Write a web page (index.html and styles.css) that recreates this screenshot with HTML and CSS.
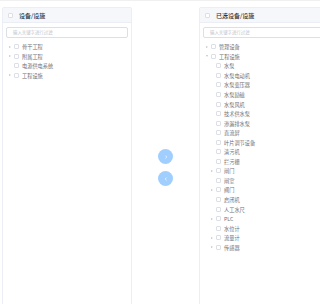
FILE: index.html
```html
<!DOCTYPE html>
<html lang="zh">
<head>
    <meta charset="UTF-8">
    <meta name="viewport" content="width=device-width, initial-scale=1.0">
    <title>设备/设施</title>
    <link rel="stylesheet" href="styles.css">
</head>
<body>
    <div class="transfer">
        <div class="panel">
            <div class="panel-header">
                <span class="checkbox"></span>
                <span class="panel-title">设备/设施</span>
            </div>
            <div class="panel-filter">
                <div class="filter-input">输入关键字进行过滤</div>
            </div>
            <ul class="tree">
                <li class="node"><span class="caret"></span><span class="checkbox"></span><span class="label">骨干工程</span></li>
                <li class="node"><span class="caret"></span><span class="checkbox"></span><span class="label">附属工程</span></li>
                <li class="node"><span class="caret leaf"></span><span class="checkbox"></span><span class="label">电源供电系统</span></li>
                <li class="node"><span class="caret"></span><span class="checkbox"></span><span class="label">工程设施</span></li>
            </ul>
        </div>

        <div class="buttons">
            <button class="circle-button">
                <svg viewBox="0 0 4 4" width="4" height="4"><polyline points="1.4,0.6 2.8,2 1.4,3.4" fill="none" stroke="#fff" stroke-width="0.7"/></svg>
            </button>
            <button class="circle-button">
                <svg viewBox="0 0 4 4" width="4" height="4"><polyline points="2.6,0.6 1.2,2 2.6,3.4" fill="none" stroke="#fff" stroke-width="0.7"/></svg>
            </button>
        </div>

        <div class="panel">
            <div class="panel-header">
                <span class="checkbox"></span>
                <span class="panel-title">已选设备/设施</span>
            </div>
            <div class="panel-filter">
                <div class="filter-input">输入关键字进行过滤</div>
            </div>
            <ul class="tree">
                <li class="node"><span class="caret"></span><span class="checkbox"></span><span class="label">管理设备</span></li>
                <li class="node"><span class="caret open"></span><span class="checkbox"></span><span class="label">工程设施</span></li>
                <li class="node sub"><span class="caret leaf"></span><span class="checkbox"></span><span class="label">水泵</span></li>
                <li class="node sub"><span class="caret leaf"></span><span class="checkbox"></span><span class="label">水泵电动机</span></li>
                <li class="node sub"><span class="caret leaf"></span><span class="checkbox"></span><span class="label">水泵变压器</span></li>
                <li class="node sub"><span class="caret leaf"></span><span class="checkbox"></span><span class="label">水泵励磁</span></li>
                <li class="node sub"><span class="caret leaf"></span><span class="checkbox"></span><span class="label">水泵风机</span></li>
                <li class="node sub"><span class="caret leaf"></span><span class="checkbox"></span><span class="label">技术供水泵</span></li>
                <li class="node sub"><span class="caret leaf"></span><span class="checkbox"></span><span class="label">渗漏排水泵</span></li>
                <li class="node sub"><span class="caret leaf"></span><span class="checkbox"></span><span class="label">直流屏</span></li>
                <li class="node sub"><span class="caret leaf"></span><span class="checkbox"></span><span class="label">叶片调节设备</span></li>
                <li class="node sub"><span class="caret leaf"></span><span class="checkbox"></span><span class="label">清污机</span></li>
                <li class="node sub"><span class="caret leaf"></span><span class="checkbox"></span><span class="label">拦污栅</span></li>
                <li class="node sub"><span class="caret"></span><span class="checkbox"></span><span class="label">闸门</span></li>
                <li class="node sub"><span class="caret leaf"></span><span class="checkbox"></span><span class="label">闸室</span></li>
                <li class="node sub"><span class="caret"></span><span class="checkbox"></span><span class="label">阀门</span></li>
                <li class="node sub"><span class="caret leaf"></span><span class="checkbox"></span><span class="label">启闭机</span></li>
                <li class="node sub"><span class="caret leaf"></span><span class="checkbox"></span><span class="label">人工水尺</span></li>
                <li class="node sub"><span class="caret"></span><span class="checkbox"></span><span class="label">PLC</span></li>
                <li class="node sub"><span class="caret leaf"></span><span class="checkbox"></span><span class="label">水位计</span></li>
                <li class="node sub"><span class="caret"></span><span class="checkbox"></span><span class="label">流量计</span></li>
                <li class="node sub"><span class="caret"></span><span class="checkbox"></span><span class="label">传感器</span></li>
            </ul>
        </div>
    </div>
</body>
</html>
```

FILE: styles.css
```css
body {
    margin: 0;
    font-family: "Noto Sans CJK SC", "Noto Sans", sans-serif;
    color: #6e7075;
    background-color: #fff;
    border-top: 1px solid #f0f0f0;
    overflow: hidden;
}
.transfer {
    display: flex;
    align-items: flex-start;
    padding: 6px 0 0 2px;
}
.panel {
    flex: none;
    width: 130px;
    height: 310px;
    box-sizing: border-box;
    border: 1px solid #ebeef5;
    border-radius: 2px;
    background-color: #fff;
}
.panel-header {
    display: flex;
    align-items: center;
    height: 14px;
    padding-left: 5px;
    background-color: #f5f7fa;
    border-bottom: 1px solid #ebeef5;
}
.panel-title {
    margin-left: 6px;
    font-size: 6px;
    font-weight: 500;
    color: #303133;
}
.checkbox {
    flex: none;
    display: inline-block;
    width: 5px;
    height: 5px;
    box-sizing: border-box;
    border: 1px solid #dcdfe6;
    border-radius: 1px;
    background-color: #fff;
}
.panel-filter {
    padding: 4px 3px 4px 3px;
}
.filter-input {
    height: 11px;
    box-sizing: border-box;
    border: 1px solid #dcdfe6;
    border-radius: 2px;
    padding-left: 6px;
    font-size: 4.4px;
    line-height: 9px;
    color: #c0c4cc;
}
.tree {
    list-style: none;
    margin: 0;
    padding: 0 0 0 4px;
}
.node {
    display: flex;
    align-items: center;
    height: 9.55px;
    font-size: 5.2px;
}
.node.sub {
    padding-left: 5px;
}
.caret {
    flex: none;
    width: 0;
    height: 0;
    margin: 0 3px 0 2px;
    border-top: 1.3px solid transparent;
    border-bottom: 1.3px solid transparent;
    border-left: 2px solid #c0c4cc;
}
.caret.open {
    transform: rotate(90deg);
}
.caret.leaf {
    border-left-color: transparent;
}
.label {
    margin-left: 3px;
    white-space: nowrap;
}
.buttons {
    flex: none;
    width: 67px;
    display: flex;
    flex-direction: column;
    align-items: center;
    gap: 7px;
    padding-top: 142px;
}
.circle-button {
    display: flex;
    align-items: center;
    justify-content: center;
    width: 15px;
    height: 15px;
    padding: 0;
    border: none;
    border-radius: 50%;
    background-color: #a0cfff;
    cursor: not-allowed;
}
```
